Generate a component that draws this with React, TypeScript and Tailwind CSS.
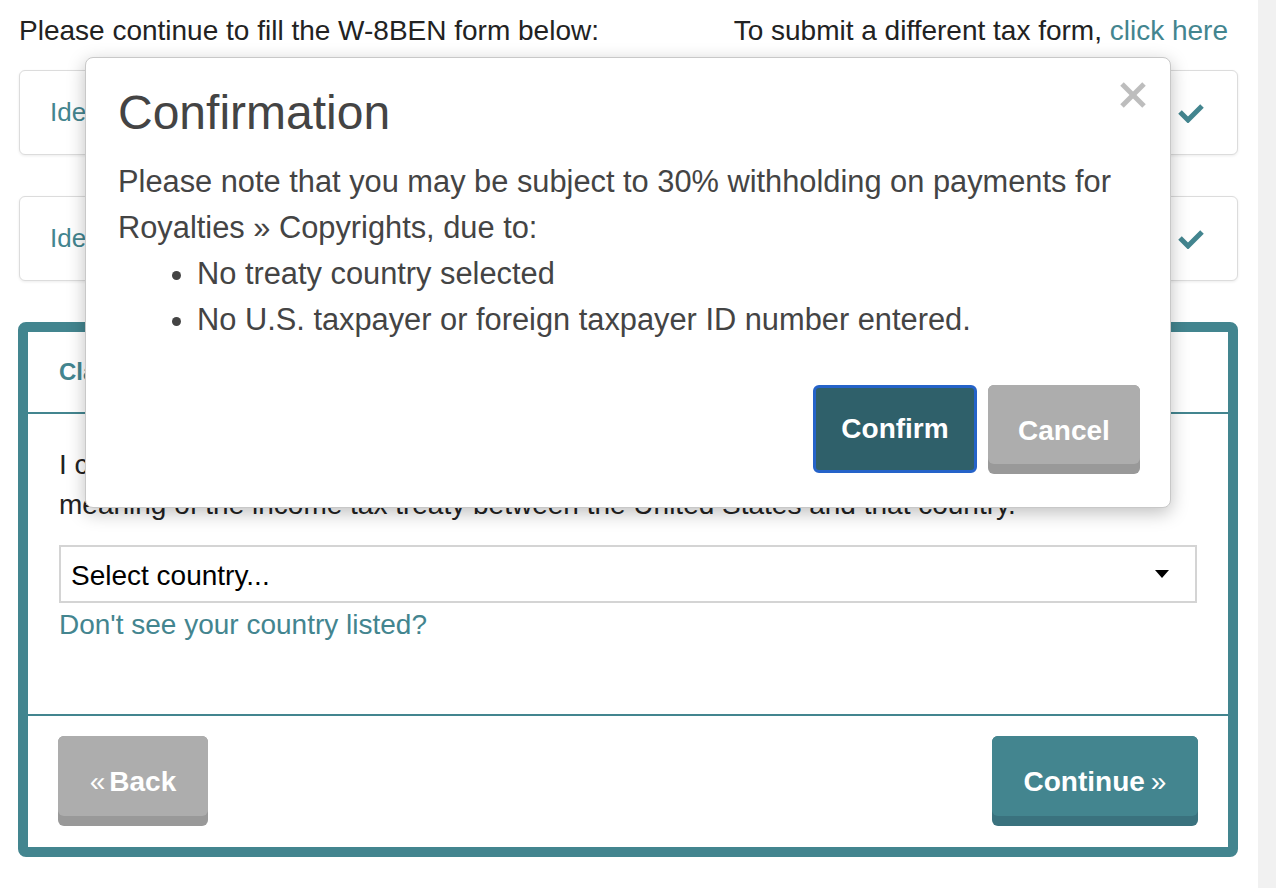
const TEAL = "#43858f";

function CheckMark() {
  return (
    <svg width="26" height="20" viewBox="0 0 26 20" aria-hidden="true">
      <polyline
        points="2,9 10,17 24,3"
        fill="none"
        stroke={TEAL}
        strokeWidth="5"
        strokeLinejoin="miter"
      />
    </svg>
  );
}

function CloseIcon() {
  return (
    <svg width="28" height="28" viewBox="0 0 28 28" aria-hidden="true">
      <line x1="3" y1="3" x2="25" y2="25" stroke="#bdbdbd" strokeWidth="5" />
      <line x1="25" y1="3" x2="3" y2="25" stroke="#bdbdbd" strokeWidth="5" />
    </svg>
  );
}

function StepCard({ label }: { label: string }) {
  return (
    <div className="ml-[1px] flex h-[85px] items-center justify-between rounded-md border border-[#dcdcdc] bg-white pl-[30px] pr-[33px] shadow-[0_1px_3px_rgba(0,0,0,0.08)]">
      <span className="text-[26px] text-[#43858f]">{label}</span>
      <CheckMark />
    </div>
  );
}

export default function App() {
  return (
    <div className="relative flex min-h-[888px] w-full bg-white font-['Liberation_Sans',Arial,sans-serif] text-[#222]">
      <main className="flex-1 pl-[18px] pr-[20px]">
        <div className="flex h-[62px] items-center justify-between pl-[1px] pr-[10px] text-[28px]">
          <span>Please continue to fill the W-8BEN form below:</span>
          <span>
            To submit a different tax form,{" "}
            <a className="text-[#43858f]">click here</a>
          </span>
        </div>

        <div className="flex flex-col gap-[41px] pt-[8px]">
          <StepCard label="Identification of Beneficial Owner" />
          <StepCard label="Identity Verification" />
        </div>

        <section className="mt-[41px] rounded-lg border-[10px] border-[#43858f] bg-white">
          <div className="flex h-[82px] items-center border-b-2 border-[#43858f] px-[31px]">
            <h3 className="text-[24px] font-bold text-[#43858f]">
              Claim of Tax Treaty Benefits
            </h3>
          </div>

          <div className="px-[31px] pb-[69px] pt-[31px] text-[28px] leading-[40px]">
            <p>
              I certify that the beneficial owner is a resident of the country
              below within the
              <br />
              meaning of the income tax treaty between the United States and
              that country.
            </p>
            <div className="mt-[20px] flex h-[58px] items-center justify-between border-2 border-[#d4d4d4] pl-[10px] pr-[26px] pt-[3px] text-black">
              <span>Select country...</span>
              <svg width="14" height="8" viewBox="0 0 14 8" aria-hidden="true" className="-mt-[3px]">
                <polygon points="0,0 14,0 7,8" fill="#000" />
              </svg>
            </div>
            <a className="mt-[2px] block text-[#43858f]">
              Don't see your country listed?
            </a>
          </div>

          <div className="flex items-center justify-between border-t-2 border-[#43858f] px-[30px] pb-[21px] pt-[20px]">
            <button
              type="button"
              className="h-[90px] w-[150px] rounded-md bg-[#999] pb-[10px]"
            >
              <span className="flex h-[80px] items-center justify-center rounded-md bg-[#adadad] pt-[12px] text-[28px] font-bold text-white">
                <span className="mr-[4px] font-normal">«</span>Back
              </span>
            </button>
            <button
              type="button"
              className="h-[90px] w-[206px] rounded-md bg-[#3a727e] pb-[10px]"
            >
              <span className="flex h-[80px] items-center justify-center rounded-md bg-[#43858f] pt-[12px] text-[28px] font-bold text-white">
                Continue<span className="ml-[6px] font-normal">»</span>
              </span>
            </button>
          </div>
        </section>
      </main>

      <div className="w-[18px] shrink-0 bg-[#f1f1f1]" />

      <div className="absolute left-[85px] top-[57px] w-[1086px] rounded-lg border border-[#c8c8c8] bg-white px-[32px] pb-[33px] pt-[27px] text-[#444] shadow-[0_5px_18px_rgba(0,0,0,0.25)]">
        <div className="absolute right-[23px] top-[23px]">
          <CloseIcon />
        </div>
        <h2 className="text-[48px] leading-[55px]">Confirmation</h2>
        <div className="mt-[19px] text-[30.8px] leading-[46px]">
          <p>
            Please note that you may be subject to 30% withholding on payments
            for Royalties » Copyrights, due to:
          </p>
          <ul className="list-disc pl-[79px]">
            <li>No treaty country selected</li>
            <li>No U.S. taxpayer or foreign taxpayer ID number entered.</li>
          </ul>
        </div>
        <div className="-mr-[2px] mt-[42px] flex justify-end gap-[11px]">
          <button
            type="button"
            className="h-[88px] w-[164px] rounded-md border-[3px] border-[#2563c9] bg-[#2f606a] text-[28px] font-bold text-white"
          >
            Confirm
          </button>
          <button
            type="button"
            className="h-[89px] w-[152px] rounded-md bg-[#999] pb-[10px]"
          >
            <span className="flex h-[79px] items-center justify-center rounded-md bg-[#adadad] pt-[12px] text-[28px] font-bold text-white">
              Cancel
            </span>
          </button>
        </div>
      </div>
    </div>
  );
}
